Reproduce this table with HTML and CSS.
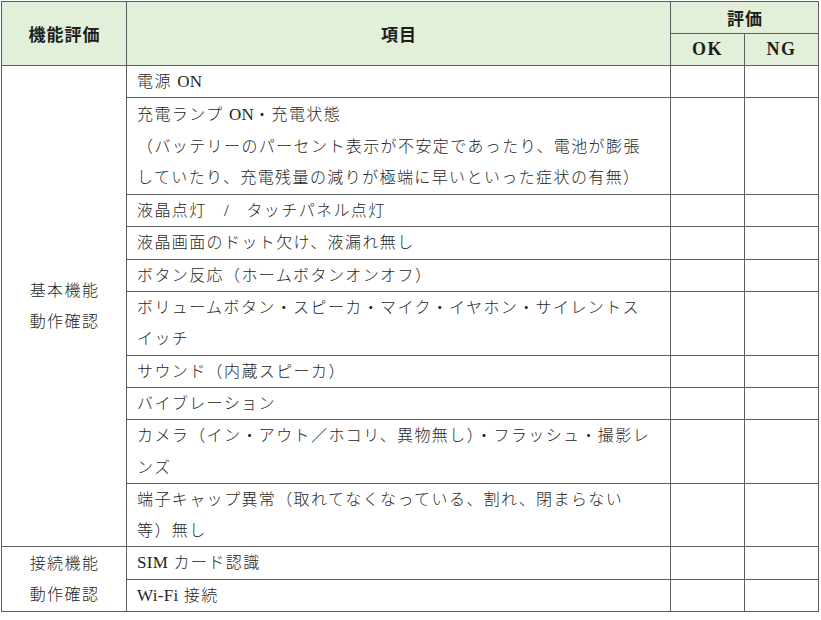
FILE: index.html
```html
<!DOCTYPE html>
<html lang="ja">
<head>
<meta charset="utf-8">
<title>機能評価</title>
<link rel="stylesheet" href="styles.css">
</head>
<body>
<table class="sheet">
  <colgroup>
    <col class="c-cat">
    <col class="c-item">
    <col class="c-eval">
    <col class="c-eval">
  </colgroup>
  <thead>
    <tr class="h1">
      <th rowspan="2" class="th-jp">機能評価</th>
      <th rowspan="2" class="th-jp">項目</th>
      <th colspan="2" class="th-jp">評価</th>
    </tr>
    <tr class="h2">
      <th class="th-en">OK</th>
      <th class="th-en">NG</th>
    </tr>
  </thead>
  <tbody>
    <tr>
      <td rowspan="10" class="cat">基本機能<br>動作確認</td>
      <td class="item">電源 <span class="lat">ON</span></td><td></td><td></td>
    </tr>
    <tr class="tall">
      <td class="item">充電ランプ <span class="lat">ON</span>・充電状態<br>（バッテリーのパーセント表示が不安定であったり、電池が膨張<br>していたり、充電残量の減りが極端に早いといった症状の有無）</td><td></td><td></td>
    </tr>
    <tr>
      <td class="item">液晶点灯　<span class="lat">/</span>　タッチパネル点灯</td><td></td><td></td>
    </tr>
    <tr>
      <td class="item">液晶画面のドット欠け、液漏れ無し</td><td></td><td></td>
    </tr>
    <tr>
      <td class="item">ボタン反応（ホームボタンオンオフ）</td><td></td><td></td>
    </tr>
    <tr>
      <td class="item">ボリュームボタン・スピーカ・マイク・イヤホン・サイレントス<br>イッチ</td><td></td><td></td>
    </tr>
    <tr>
      <td class="item">サウンド（内蔵スピーカ）</td><td></td><td></td>
    </tr>
    <tr>
      <td class="item">バイブレーション</td><td></td><td></td>
    </tr>
    <tr>
      <td class="item">カメラ（イン・アウト／ホコリ、異物無し）・フラッシュ・撮影レ<br>ンズ</td><td></td><td></td>
    </tr>
    <tr>
      <td class="item">端子キャップ異常（取れてなくなっている、割れ、閉まらない<br>等）無し</td><td></td><td></td>
    </tr>
    <tr>
      <td rowspan="2" class="cat">接続機能<br>動作確認</td>
      <td class="item"><span class="lat">SIM</span> カード認識</td><td></td><td></td>
    </tr>
    <tr>
      <td class="item"><span class="lat">Wi-Fi</span> 接続</td><td></td><td></td>
    </tr>
  </tbody>
</table>
</body>
</html>
```

FILE: styles.css
```css
html, body {
  margin: 0;
  padding: 0;
  background: #ffffff;
}

.sheet {
  margin: 1px 0 0 1px;
  border-collapse: collapse;
  table-layout: fixed;
  width: 817px;
  font-family: "Liberation Serif", "Noto Sans CJK JP", serif;
  color: #1f1f1f;
  border: 1.5px solid #707070;
}

.c-cat { width: 125px; }
.c-item { width: 544px; }
.c-eval { width: 74px; }

.sheet th,
.sheet td {
  border: 1px solid #5e5e5e;
  padding: 0;
}

.sheet th {
  background: #e2efd9;
  color: #1e1e1e;
  text-align: center;
  vertical-align: middle;
}

.sheet .h1 th { height: 31px; }
.sheet .h2 th { height: 31px; }

.sheet .th-jp {
  font-family: "Noto Sans CJK JP", sans-serif;
  font-weight: 700;
  font-size: 17px;
  letter-spacing: 1px;
  padding-left: 1px;
}

.sheet .th-en {
  font-family: "Liberation Serif", serif;
  font-weight: 700;
  font-size: 18px;
  letter-spacing: 1.5px;
}

.sheet td {
  font-size: 16px;
  line-height: 31.3px;
  letter-spacing: 1.4px;
  font-weight: 300;
  vertical-align: middle;
}

.sheet .tall td {
  padding-top: 1px;
  padding-bottom: 1px;
}

.sheet .item {
  padding-left: 10px;
  padding-right: 10px;
  white-space: nowrap;
  text-align: left;
}

.sheet .cat {
  text-align: center;
  padding-left: 1px;
}

.lat {
  font-family: "Liberation Serif", serif;
  font-weight: 400;
  font-size: 17px;
  letter-spacing: 0.3px;
}
```
